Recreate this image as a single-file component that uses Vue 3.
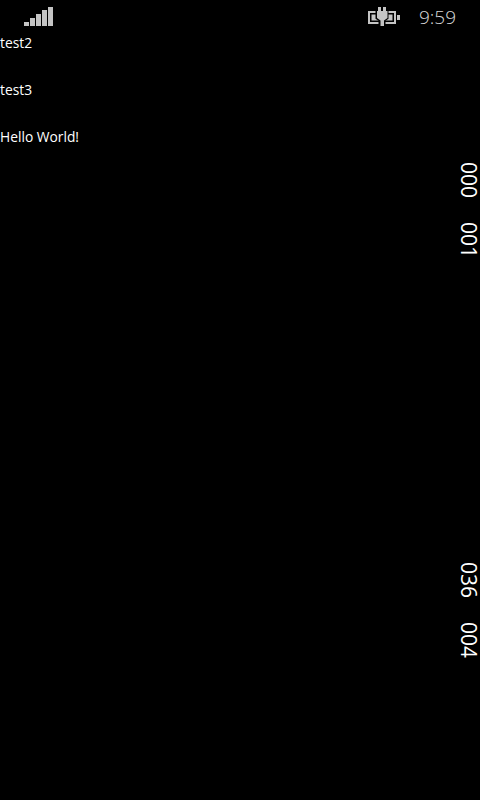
<script setup>
const rows = ['test2', 'test3', 'Hello World!']
const bars = [4, 8, 12, 16, 19]
const topNums = ['000', '001']
const bottomNums = ['036', '004']
</script>

<template>
  <div class="page">
    <header class="status">
      <div class="signal">
        <span v-for="h in bars" :key="h" class="bar" :style="{ height: h + 'px' }"></span>
      </div>
      <div class="right">
        <svg class="battery" width="32" height="19" viewBox="0 0 32 19">
          <rect x="1" y="5" width="26" height="11" fill="none" stroke="#c4c4c4" stroke-width="2" />
          <rect x="3.500" y="7.500" width="21" height="6" fill="#c4c4c4" />
          <rect x="29" y="8" width="3" height="5" fill="#c4c4c4" />
          <path fill="#000" stroke="#000" stroke-width="3" d="M10 1h8v3h1v7l-3 2v5h-4v-5l-3-2V4h1z" />
          <path fill="#c4c4c4" d="M10 0h3v4h2V0h3v4h1.500v7L16 13.500V19h-3.500v-5.500L9 11V4h1z" />
        </svg>
        <span class="time">9:59</span>
      </div>
    </header>
    <main class="body">
      <ul class="list">
        <li v-for="r in rows" :key="r" class="row">{{ r }}</li>
      </ul>
      <aside class="rail">
        <div class="group">
          <span v-for="n in topNums" :key="n" class="num">{{ n }}</span>
        </div>
        <div class="group">
          <span v-for="n in bottomNums" :key="n" class="num">{{ n }}</span>
        </div>
      </aside>
    </main>
  </div>
</template>

<style>
html, body { margin: 0; background: #000; }
</style>

<style scoped>
.page {
  width: 480px;
  height: 800px;
  background: #000;
  color: #fff;
  font-family: "Open Sans", "Noto Sans", sans-serif;
  display: flex;
  flex-direction: column;
  overflow: hidden;
}
.status {
  height: 32px;
  flex: none;
  display: flex;
  justify-content: space-between;
  padding: 7px 24px 0;
  box-sizing: border-box;
  color: #d8d8d8;
}
.signal {
  display: flex;
  align-items: flex-end;
  gap: 1px;
  height: 19px;
}
.bar { width: 5px; background: #c4c4c4; }
.right { display: flex; align-items: center; height: 19px; }
.battery { display: block; }
.time { font-size: 19px; line-height: 20px; margin-left: 19px; font-weight: 300; }
.body { flex: 1; display: flex; min-height: 0; }
.list {
  list-style: none;
  margin: 0;
  padding: 0;
  flex: 1;
}
.row {
  height: 47px;
  line-height: 22px;
  font-size: 13.800px;
}
.rail {
  width: 21px;
  padding: 130px 0 0;
  box-sizing: border-box;
}
.group {
  display: flex;
  flex-direction: column;
  align-items: flex-start;
  gap: 24px;
  height: 400px;
}
.num {
  writing-mode: vertical-rl;
  font-size: 21px;
  font-weight: 500;
  line-height: 19px;
  height: 36px;
  width: 19px;
}
</style>
